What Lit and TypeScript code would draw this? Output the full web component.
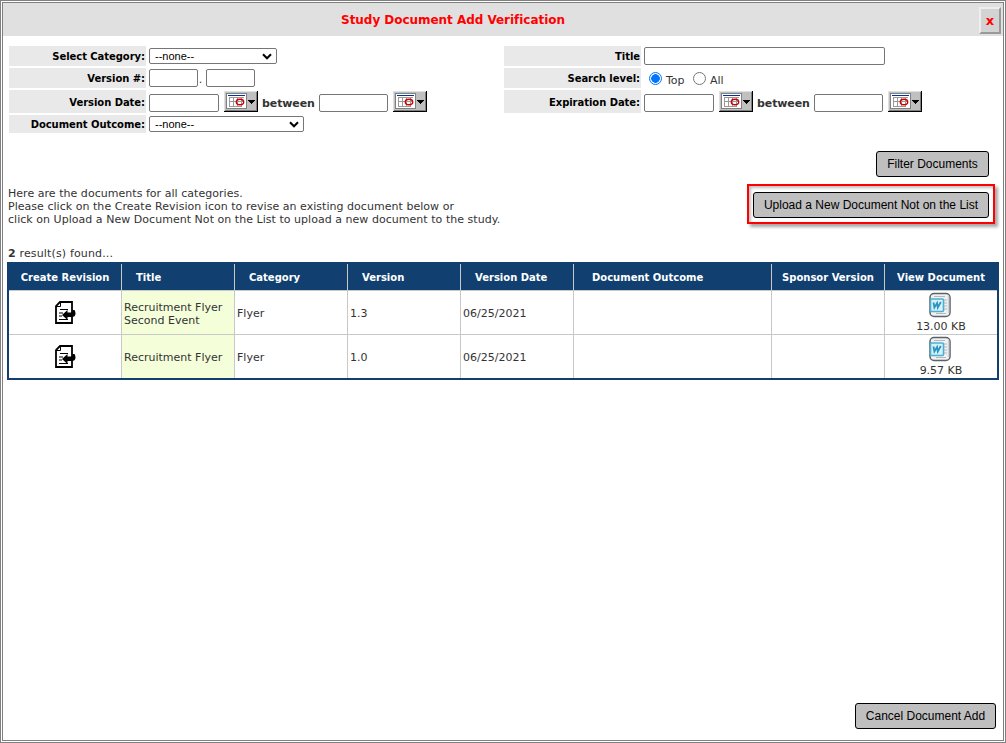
import { LitElement, html, css } from "lit";
import { customElement } from "lit/decorators.js";

const calendar = html`<span class="cal"><svg width="34" height="21" viewBox="0 0 34 21" shape-rendering="crispEdges">
  <rect width="34" height="21" fill="#000"/><rect width="33" height="20" fill="#e0e0e0"/><rect x="1" y="1" width="32" height="19" fill="#808080"/><rect x="1" y="1" width="31" height="18" fill="#c0c0c0"/>
  <rect x="2" y="2" width="21" height="16" fill="#808080"/><rect x="3" y="3" width="19" height="14" fill="#fff"/>
  <rect x="4" y="4" width="17" height="1" fill="#003399"/>
  <path d="M5.500 6v10M9.500 6v10M13.500 6v10M17.500 6v10M5 6.500h15M5 10.500h15M5 15.500h13" stroke="#999" fill="none"/>
  <ellipse cx="16" cy="11" rx="3.700" ry="2.700" fill="none" stroke="#d00000" stroke-width="1.400" shape-rendering="auto"/>
  <path d="M24 9h7v1h-1v1h-1v1h-1v1h-1v-1h-1v-1h-1v-1h-1z" fill="#000"/></svg></span>`;

const revision = html`<svg class="rev" width="22" height="25" viewBox="0 0 22 25">
  <path d="M6 2H18V23H2V6z" fill="#fff" stroke="#000" stroke-width="1.800"/>
  <path d="M6.500 2V6.500H2" fill="none" stroke="#000" stroke-width="1"/>
  <path d="M6 9.500h8M5 13h4M5 16h3M5 19.500h9" stroke="#000" stroke-width="1.200" fill="none"/>
  <path d="M8 15l5.500-5v2.500h3.500q1.500 0 1.500-2.500h2q1 1.500 1 3.500 0 3.500-4 3.500h-4v3z" fill="#000"/></svg>`;

const word = html`<svg class="word" width="24" height="26" viewBox="0 0 24 26">
  <rect x="2" y="1.500" width="20" height="23" rx="4" fill="#f0f1f2" stroke="#5c6267" stroke-width="1.500"/>
  <path d="M6 4.500h11M16 8h3M16 11h3M16 14h3M16 17h3M8 21.500h10" stroke="#b4b9bd" stroke-width="1.200"/>
  <path d="M20.500 4v17" stroke="#d0d4d7" stroke-width="1.500"/>
  <rect x="2.500" y="7" width="13" height="12.500" rx="1" fill="#d9f0f8" stroke="#4bb1d3" stroke-width="1.600"/>
  <path d="M5.500 10.500l.9 5 2.700-4.500.7 4.500 3-5.500" fill="none" stroke="#2b94bf" stroke-width="1.800"/></svg>`;

const chevron = html`<svg class="chev" width="10" height="7" viewBox="0 0 10 7"><path d="M1 1.300l4 4 4-4" fill="none" stroke="#000" stroke-width="2"/></svg>`;

@customElement("app-root")
export class AppRoot extends LitElement {
  static styles = css`
    :host { display: block; height: 743px; font: 11px/13px "DejaVu Sans", sans-serif; color: #333; }
    * { box-sizing: border-box; }
    .dialog { height: 743px; border: 3px double #808080; display: flex; flex-direction: column; background: #fff; }
    .bar { height: 33px; flex: none; background: #e0e0e0; display: grid; grid-template-columns: 1fr auto; padding: 4px 2px 0 0; }
    .heading { color: #f00; font-weight: bold; font-size: 12px; line-height: 26px; text-align: center; padding: 0 76px 0 0; letter-spacing: -.04px; }
    .close { width: 22px; height: 27px; border: 2px outset #eee; background: #d3d3d3; color: #f00; font: bold 13px/22px "DejaVu Sans", sans-serif; text-align: center; padding: 0; }
    .form { display: grid; grid-template-columns: 495px 1fr; padding: 10px 0 0 6px; height: 100px; flex: none; }
    .side { display: grid; grid-template-rows: 20px 20px 23px 18px; gap: 2px 3px; grid-template-columns: 137px 1fr; align-content: start; }
    .label { background: #e9e9e9; color: #000; font-weight: bold; display: flex; align-items: center; justify-content: flex-end; padding: 1px 1px 0 0; font-size: 10px; letter-spacing: -.05px; }
    .field { display: flex; align-items: center; font-size: 11px; }
    .date { padding-top: 2px; }
    .box { border: 1px solid #767676; border-radius: 2px; height: 18px; background: #fff; }
    .v { width: 49px; } .d { width: 70px; } .e { width: 69px; } .t { width: 241px; }
    .dot { width: 8px; text-align: center; padding: 3px 3px 0 0; font-size: 11px; }
    .select { border: 1px solid #767676; border-radius: 2px; height: 16px; display: flex; align-items: center; justify-content: space-between; padding: 0 4px 0 5px; color: #000; font: 11px/14px "Liberation Sans", sans-serif; }
    .s1 { width: 128px; } .s2 { width: 155px; }
    .cal { margin: -2px 4px 0 5px; height: 21px; } .cal svg, .chev { display: block; }
    .between { font-weight: bold; font-size: 11px; width: 57px; letter-spacing: -.1px; padding-top: 1px; }
    .radio { width: 13px; height: 13px; border: 1px solid #767676; border-radius: 50%; margin: 0 4px 0 5px; }
    .on { border-color: #0075ff; background: radial-gradient(circle, #0075ff 4px, #fff 4.600px); }
    .rt { padding-top: 5px; } .top { width: 22px; }
    .actions { display: grid; grid-template-columns: 1fr auto; padding: 15px 7px 0 5px; height: 126px; flex: none; }
    .intro { padding-top: 36px; letter-spacing: .035px; }
    .found { margin-top: 21px; letter-spacing: .15px; }
    .right { display: flex; flex-direction: column; align-items: flex-end; }
    .btn { height: 26px; border: 1px solid #000; border-radius: 3px; background: #bfbfbf; color: #000; padding: 0; font: 12px/23px "Liberation Sans", sans-serif; text-align: center; }
    .filter { width: 113px; margin-right: 7px; }
    .mark { margin: 7px 1px 0 0; border: 2px solid #f00; padding: 6px 4px 4px; width: 248px; height: 40px; box-shadow: 3px 3px 3px rgba(0,0,0,.35), inset 2px 2px 3px rgba(0,0,0,.25); }
    .upload { width: 236px; }
    .table { margin-left: 4px; margin-right: 4px; flex: none; border: 2px solid #103f70; display: grid; grid-template-columns: 113px 113px 113px 113px 113px 198px 113px 112px; grid-template-rows: 27px 44px 43px; width: 992px; height: 118px; }
    .table > div { border-right: 1px solid #c8c8c8; border-bottom: 1px solid #c8c8c8; padding: 2px 2px 0; display: flex; flex-direction: column; justify-content: center; align-items: flex-start; }
    .table > .last { border-right: 0; }
    .table > .end { border-bottom: 0; }
    .table > .h { background: #103f70; color: #fff; font-weight: bold; padding: 0 0 0 14px; font-size: 10px; white-space: nowrap; }
    .table > .wide { padding-left: 18px; }
    .table > .c { align-items: center; padding: 0; }
    .table > .file { justify-content: flex-start; padding-top: 1px; }
    .table > .hc { align-items: center; padding: 0; }
    .table > .name { background: #f4ffda; }
    .rev, .word { display: block; flex: none; }
    .word { margin: 0 0 2px -2px; }
    .footer { margin-top: auto; display: flex; justify-content: flex-end; padding: 0 7px 11px 0; }
    .cancel { width: 141px; }
  `;

  row(name: unknown, version: string, size: string, end: string) {
    return html`<div class="c ${end}">${revision}</div><div class="name ${end}"><span>${name}</span></div><div class=${end}>Flyer</div>
      <div class=${end}>${version}</div><div class=${end}>06/25/2021</div><div class=${end}></div><div class=${end}></div>
      <div class="c file last ${end}">${word}<span>${size}</span></div>`;
  }

  dates() {
    return html`<div class="field date"><span class="box d"></span>${calendar}<span class="between">between</span><span class="box e"></span>${calendar}</div>`;
  }

  render() {
    return html`<div class="dialog">
      <div class="bar"><div class="heading"><span>Study Document Add Verification</span></div><button class="close">x</button></div>
      <div class="form">
        <div class="side">
          <div class="label">Select Category:</div><div class="field"><div class="select s1">--none--${chevron}</div></div>
          <div class="label">Version #:</div><div class="field"><span class="box v"></span><span class="dot">.</span><span class="box v"></span></div>
          <div class="label">Version Date:</div>${this.dates()}
          <div class="label">Document Outcome:</div><div class="field"><div class="select s2">--none--${chevron}</div></div>
        </div>
        <div class="side">
          <div class="label">Title</div><div class="field"><span class="box t"></span></div>
          <div class="label">Search level:</div><div class="field"><span class="radio on"></span><span class="rt top">Top</span><span class="radio"></span><span class="rt">All</span></div>
          <div class="label">Expiration Date:</div>${this.dates()}
        </div>
      </div>
      <div class="actions">
        <div class="intro">Here are the documents for all categories.<br>Please click on the Create Revision icon to revise an existing document below or<br>click on Upload a New Document Not on the List to upload a new document to the study.
          <div class="found"><b>2</b> result(s) found...</div></div>
        <div class="right"><button class="btn filter">Filter Documents</button><div class="mark"><button class="btn upload">Upload a New Document Not on the List</button></div></div>
      </div>
      <div class="table">
        <div class="h hc">Create Revision</div><div class="h">Title</div><div class="h">Category</div><div class="h">Version</div><div class="h">Version Date</div><div class="h wide">Document Outcome</div><div class="h hc">Sponsor Version</div><div class="h hc last">View Document</div>
        ${this.row(html`Recruitment Flyer<br>Second Event`, "1.3", "13.00 KB", "")}
        ${this.row("Recruitment Flyer", "1.0", "9.57 KB", "end")}
      </div>
      <div class="footer"><button class="btn cancel">Cancel Document Add</button></div>
    </div>`;
  }
}
